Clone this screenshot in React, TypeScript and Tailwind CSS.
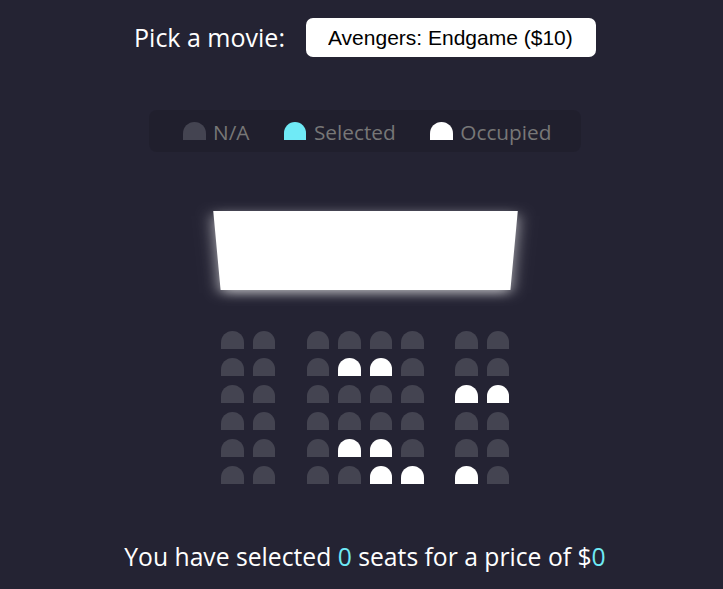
import { useState } from 'react'

// 0 = free, 1 = occupied
const ROWS: number[][] = [
  [0, 0, 0, 0, 0, 0, 0, 0],
  [0, 0, 0, 1, 1, 0, 0, 0],
  [0, 0, 0, 0, 0, 0, 1, 1],
  [0, 0, 0, 0, 0, 0, 0, 0],
  [0, 0, 0, 1, 1, 0, 0, 0],
  [0, 0, 0, 0, 1, 1, 1, 0],
]

const MOVIES = [
  { label: 'Avengers: Endgame ($10)', price: 10 },
  { label: 'Joker ($12)', price: 12 },
  { label: 'Toy Story 4 ($8)', price: 8 },
  { label: 'The Lion King ($9)', price: 9 },
]

function Seat({ kind, extra = '' }: { kind: 'na' | 'selected' | 'occupied'; extra?: string }) {
  const color =
    kind === 'occupied' ? 'bg-white' : kind === 'selected' ? 'bg-[#6feaf6]' : 'bg-[#444451]'
  return <div className={`m-[4.5px] h-[18px] w-[22.5px] rounded-t-[15px] ${color} ${extra}`} />
}

export default function App() {
  const [movie, setMovie] = useState(0)
  const count = 0
  const total = count * MOVIES[movie].price

  return (
    <div
      className="flex min-h-screen flex-col items-center bg-[#242333] pl-[7px] pt-[18px] text-white"
      style={{ fontFamily: '"Open Sans", sans-serif' }}
    >
      {/* 选片 */}
      <div className="flex h-[39px] items-center">
        <label className="text-[25px] leading-none">Pick a movie:</label>
        <select
          value={movie}
          onChange={(e) => setMovie(Number(e.target.value))}
          className="ml-[21px] h-[39px] w-[290px] appearance-none rounded-[7px] border-0 bg-white px-[22px] text-[21px] text-black outline-none"
          style={{ fontFamily: '"Liberation Sans", Arial, sans-serif' }}
        >
          {MOVIES.map((m, i) => (
            <option key={m.label} value={i}>
              {m.label}
            </option>
          ))}
        </select>
      </div>

      {/* 图例 */}
      <ul className="mt-[53px] flex h-[42px] items-center rounded-[7.5px] bg-black/10 px-[15px] text-[#777]">
        <li className="mx-[15px] flex items-center">
          <Seat kind="na" />
          <small className="ml-[3px] mt-[2px] text-[20.8px] leading-none">N/A</small>
        </li>
        <li className="mx-[15px] flex items-center">
          <Seat kind="selected" />
          <small className="ml-[3px] mt-[2px] text-[20.8px] leading-none">Selected</small>
        </li>
        <li className="mx-[15px] flex items-center">
          <Seat kind="occupied" />
          <small className="ml-[3px] mt-[2px] text-[20.8px] leading-none">Occupied</small>
        </li>
      </ul>

      {/* 银幕 + 座位 */}
      <div className="mt-[47px] [perspective:1500px]">
        <div className="mb-[22.5px] h-[105px] w-full bg-white shadow-[0_4.5px_15px_rgba(255,255,255,0.7)] [transform:rotateX(-45deg)]" />
        {ROWS.map((row, r) => (
          <div key={r} className="flex">
            {row.map((s, c) => (
              <Seat
                key={c}
                kind={s ? 'occupied' : 'na'}
                extra={c === 1 ? 'mr-[27px]' : c === 6 ? 'ml-[27px]' : ''}
              />
            ))}
          </div>
        ))}
      </div>

      <p className="mt-[53px] text-[24.7px] leading-[1.2]">
        You have selected <span className="text-[#6feaf6]">{count}</span> seats for a price of $
        <span className="text-[#6feaf6]">{total}</span>
      </p>
    </div>
  )
}
